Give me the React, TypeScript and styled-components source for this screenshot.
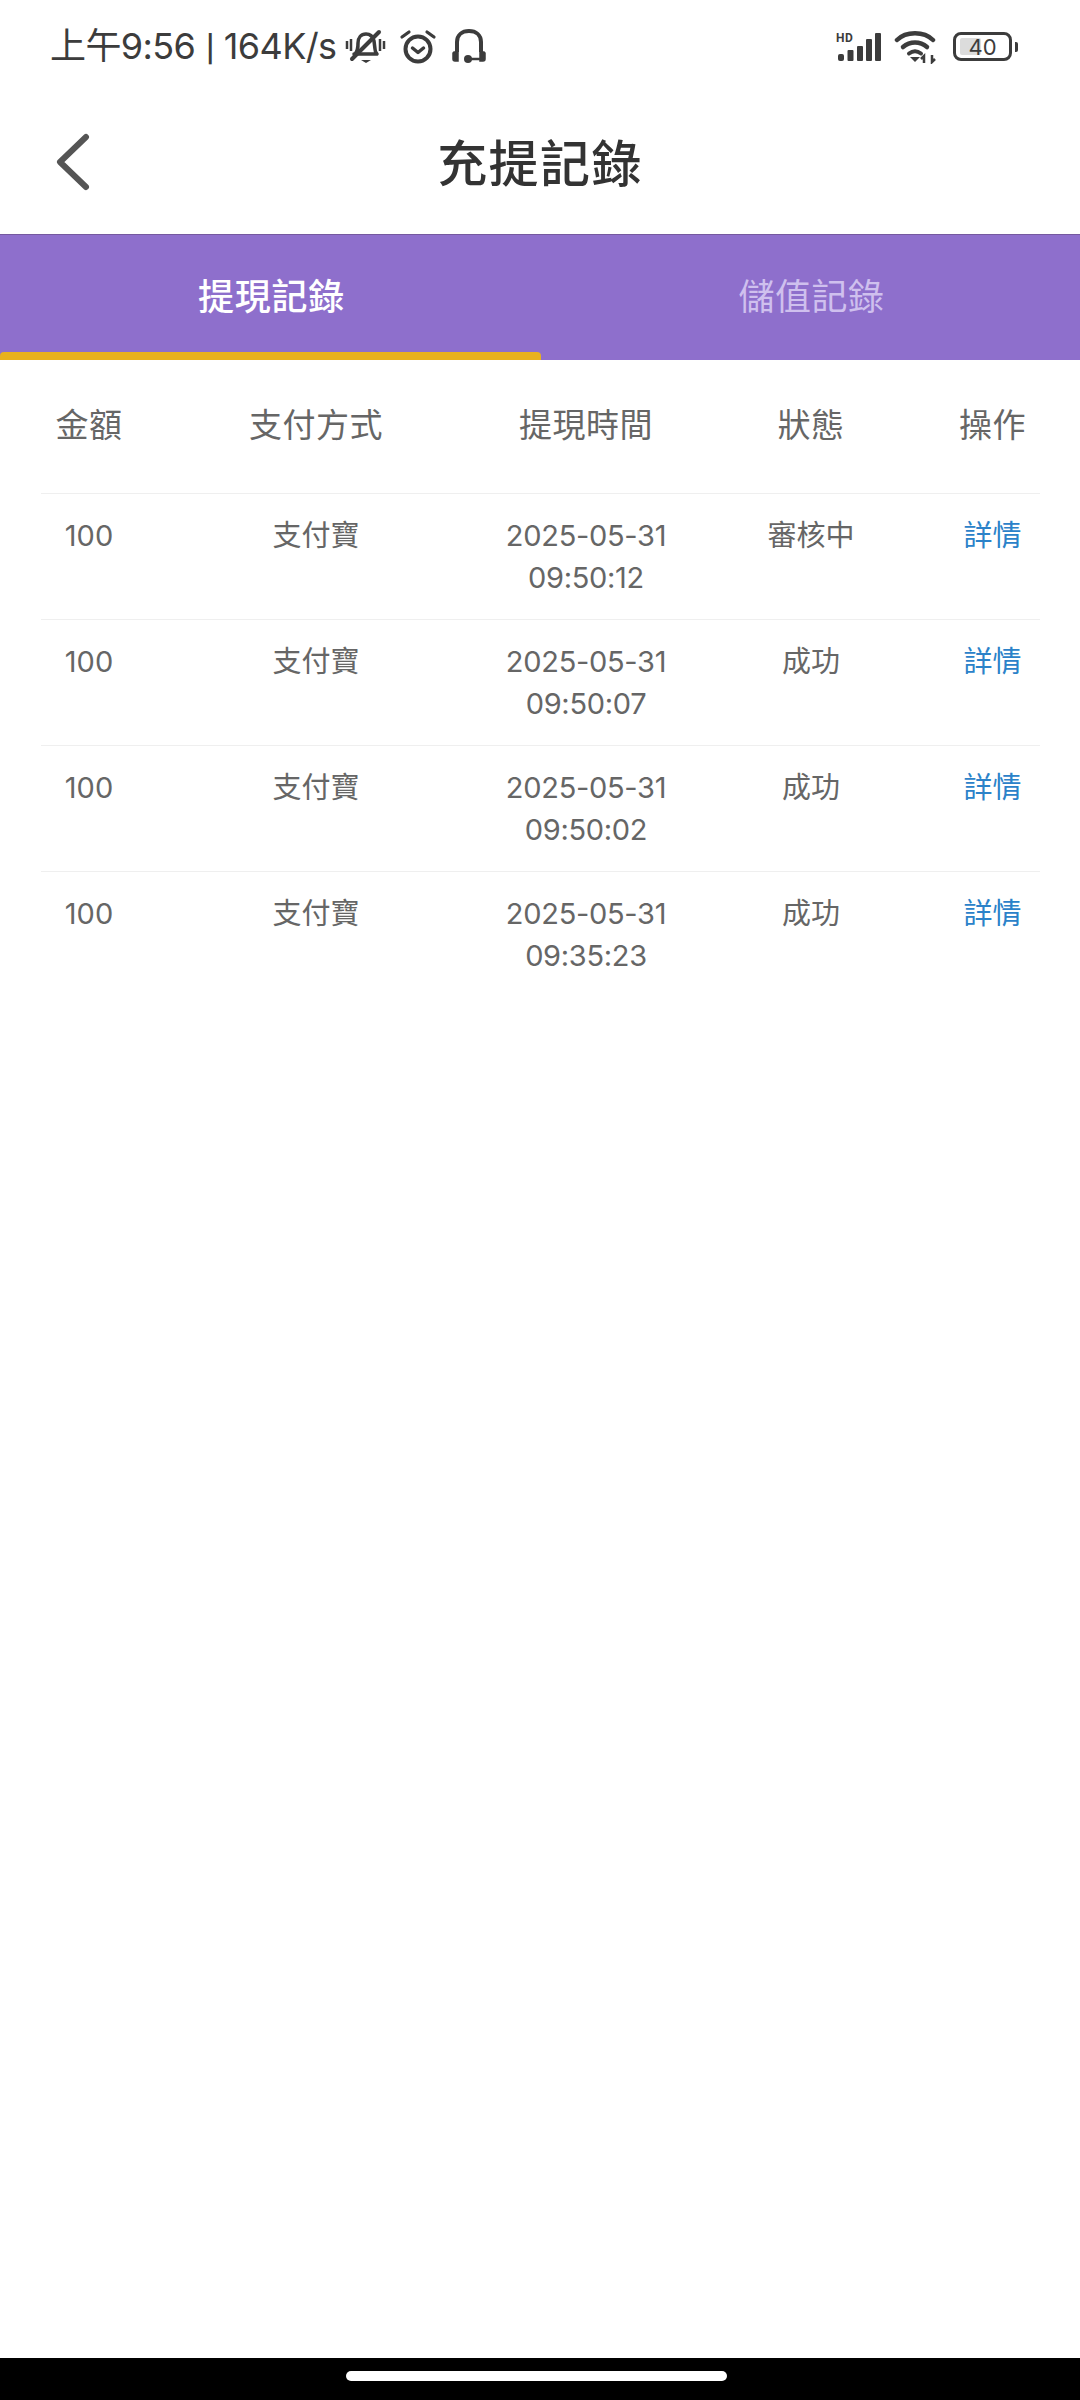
import React from "react";
import styled, { createGlobalStyle } from "styled-components";

const Global = createGlobalStyle`
  html, body { margin: 0; padding: 0; background: #fff; }
  * { box-sizing: border-box; }
`;
const FONT = `Inter, "Noto Sans CJK TC", sans-serif`;
const Page = styled.div`
  width: 1080px; height: 2400px; display: flex; flex-direction: column;
  background: #fff; font-family: ${FONT}; overflow: hidden;
`;
const StatusBar = styled.div`
  height: 90px; flex: none; display: flex; align-items: center; justify-content: space-between;
  padding: 3px 62px 0 50px; color: #3c3c3c;
`;
const StatusGroup = styled.div`display: flex; align-items: center;`;
const StatusText = styled.span`font-size: 36px; line-height: 40px; white-space: nowrap; letter-spacing: -0.6px;`;
const StatusPipe = styled.span`font-family: Roboto, sans-serif; font-weight: 500; margin: 0 0 0 1px;`;
const IconSlot = styled.span<{ $ml: number }>`display: flex; margin-left: ${p => p.$ml}px;`;
const Signal = styled.span`position: relative; display: flex; width: 45px; height: 28px;`;
const HdMark = styled.span`
  position: absolute; left: 0; top: -2px; font: 700 12px/14px Roboto, sans-serif; letter-spacing: .5px; color: #3c3c3c;
`;
const Battery = styled.span`
  position: relative; width: 59px; height: 29px; border: 3px solid #3c3c3c; border-radius: 8px;
  display: flex; align-items: center; justify-content: center; margin-left: 15px;
`;
const BatteryFill = styled.span`
  position: absolute; left: 4px; top: 3px; bottom: 3px; width: 40%; background: #dcdcdc; border-radius: 2px;
`;
const BatteryText = styled.span`
  position: relative; font-size: 22px; line-height: 22px; color: #3c3c3c;
`;
const BatteryCap = styled.span`
  width: 3px; height: 10px; background: #3c3c3c; border-radius: 0 2px 2px 0; margin-left: 3px;
`;
const NavBar = styled.div`
  height: 144px; flex: none; position: relative; display: flex; align-items: center; justify-content: center;
`;
const BackButton = styled.span`position: absolute; left: 55px; top: 43px; display: flex;`;
const Title = styled.h1`
  margin: 0; font-size: 50px; line-height: 60px; font-weight: 500; color: #333; letter-spacing: 1.4px;
  position: relative; top: 2px;
`;
const Tabs = styled.div`
  height: 126px; flex: none; display: flex; background: #8e6fcc; border-top: 1px solid #75599f;
`;
const Tab = styled.div<{ $active?: boolean }>`
  flex: 1; position: relative; display: flex; align-items: center; justify-content: center;
  font-size: 36px; letter-spacing: ${p => (p.$active ? ".8px" : ".5px")}; padding-bottom: 8px;
  padding-left: 3px; font-weight: ${p => (p.$active ? 500 : 400)};
  color: ${p => (p.$active ? "#fff" : "#cfc0ee")};
`;
const Indicator = styled.span`
  position: absolute; left: 0; right: -1px; bottom: 0; height: 8px; background: #e9b11e; border-radius: 4px 4px 0 0;
`;
const Table = styled.div`margin: 0 40px 0 41px;`;
const Row = styled.div<{ $head?: boolean }>`
  display: grid; grid-template-columns: 96px 358px 182px 268px 95px;
  border-bottom: 1px solid #efefef; text-align: center;
  padding: ${p => (p.$head ? "0" : "21px 0 20px")};
  height: ${p => (p.$head ? "134px" : "126px")};
  align-items: ${p => (p.$head ? "center" : "start")};
  &:last-child { border-bottom: none; }
`;
const HeadCell = styled.div`font-size: 33px; letter-spacing: .5px; line-height: 44px; color: #666; position: relative; top: -2px;`;
const Cell = styled.div<{ $link?: boolean }>`
  font-size: 29px; line-height: 42px; color: ${p => (p.$link ? "#2b82c9" : "#666")};
`;
const TimeCell = styled(Cell)`letter-spacing: -0.3px;`;
const Spacer = styled.div`flex: 1;`;
const HomeBar = styled.div`
  height: 42px; flex: none; background: #000; display: flex; justify-content: center; padding: 13px 7px 0 0;
`;
const HomePill = styled.span`width: 381px; height: 10px; border-radius: 5px; background: #fff;`;

const rows = [
  ["100", "支付寶", "2025-05-31", "09:50:12", "審核中"],
  ["100", "支付寶", "2025-05-31", "09:50:07", "成功"],
  ["100", "支付寶", "2025-05-31", "09:50:02", "成功"],
  ["100", "支付寶", "2025-05-31", "09:35:23", "成功"],
];
const C = "#3c3c3c";

export default function App() {
  return (
    <Page>
      <Global />
      <StatusBar>
        <StatusGroup>
          <StatusText>上午9:56 <StatusPipe>|</StatusPipe> 164K/s</StatusText>
          <IconSlot $ml={7}>
            <svg width="42" height="38" viewBox="0 0 42 38" fill="none" stroke={C}>
              <path d="M11 26c3-3 3-6 3-11 0-5 3-9 8-9 4 0 7 3 8 7l1 8c0 2 1 4 2 5H10z" strokeWidth="3.5" strokeLinejoin="round" />
              <path d="M8 31 35 4" strokeWidth="4" strokeLinecap="round" />
              <path d="M3 13v8M7 11v12M36 11v12M40 13v8" strokeWidth="2.5" />
              <path d="M17 32h10l-5 3z" fill={C} stroke="none" />
            </svg>
          </IconSlot>
          <IconSlot $ml={13}>
            <svg width="38" height="38" viewBox="0 0 38 38" fill="none" stroke={C}>
              <circle cx="19" cy="21" r="12.5" strokeWidth="4" />
              <path d="M13.5 20l5.5 4.5 5.5-4.5" strokeWidth="3.5" strokeLinecap="round" strokeLinejoin="round" />
              <path d="M3 9 10 4M35 9l-7-5" strokeWidth="3.2" strokeLinecap="round" />
            </svg>
          </IconSlot>
          <IconSlot $ml={14}>
            <svg width="36" height="38" viewBox="0 0 36 38" fill="none" stroke={C}>
              <path d="M6 24V14C6 7 11 3 18 3s12 4 12 11v10" strokeWidth="4" />
              <path d="M3 24h4v9H4c-1 0-2-1-2-2v-6zM33 24h-4v9h3c1 0 2-1 2-2v-6z" fill={C} strokeWidth="1.5" />
              <circle cx="17" cy="31" r="4" fill={C} stroke="none" />
              <path d="M17 31h13" strokeWidth="2.5" />
            </svg>
          </IconSlot>
        </StatusGroup>
        <StatusGroup>
          <Signal>
            <HdMark>HD</HdMark>
            <svg width="45" height="28" viewBox="0 0 45 28" fill={C}>
              <rect x="2" y="21" width="6" height="7" rx="2" />
              <rect x="11.500" y="17" width="6" height="11" rx="1" />
              <rect x="21" y="13" width="6" height="15" rx="1" />
              <rect x="30" y="6" width="6" height="22" rx="1" />
              <rect x="39" y="0" width="6" height="28" rx="1" />
            </svg>
          </Signal>
          <IconSlot $ml={13}>
            <svg width="44" height="34" viewBox="0 0 44 34" fill="none" stroke={C}>
              <path d="M3 10C12 1 30 1 39 10" strokeWidth="4.5" strokeLinecap="round" />
              <path d="M9 17c7-6 17-6 24 0" strokeWidth="4.5" strokeLinecap="round" />
              <path d="M15 23.500c4-3 8-3 12 0" strokeWidth="4" strokeLinecap="round" />
              <path d="M16 27h10l-5 5z" fill={C} stroke="none" />
              <path d="M30 33v-7l-3 3M38 25v7l3-3" strokeWidth="2.5" />
            </svg>
          </IconSlot>
          <Battery>
            <BatteryFill />
            <BatteryText>40</BatteryText>
          </Battery>
          <BatteryCap />
        </StatusGroup>
      </StatusBar>
      <NavBar>
        <BackButton>
          <svg width="36" height="58" viewBox="0 0 36 58" fill="none" stroke="#555">
            <path d="M31 4 5 29l26 25" strokeWidth="6" strokeLinecap="round" strokeLinejoin="round" />
          </svg>
        </BackButton>
        <Title>充提記錄</Title>
      </NavBar>
      <Tabs>
        <Tab $active>
          提現記錄
          <Indicator />
        </Tab>
        <Tab>儲值記錄</Tab>
      </Tabs>
      <Table>
        <Row $head>
          <HeadCell>金額</HeadCell>
          <HeadCell>支付方式</HeadCell>
          <HeadCell>提現時間</HeadCell>
          <HeadCell>狀態</HeadCell>
          <HeadCell>操作</HeadCell>
        </Row>
        {rows.map(r => (
          <Row key={r[3]}>
            <Cell>{r[0]}</Cell>
            <Cell>{r[1]}</Cell>
            <TimeCell>
              {r[2]}
              <br />
              {r[3]}
            </TimeCell>
            <Cell>{r[4]}</Cell>
            <Cell $link>詳情</Cell>
          </Row>
        ))}
      </Table>
      <Spacer />
      <HomeBar>
        <HomePill />
      </HomeBar>
    </Page>
  );
}
